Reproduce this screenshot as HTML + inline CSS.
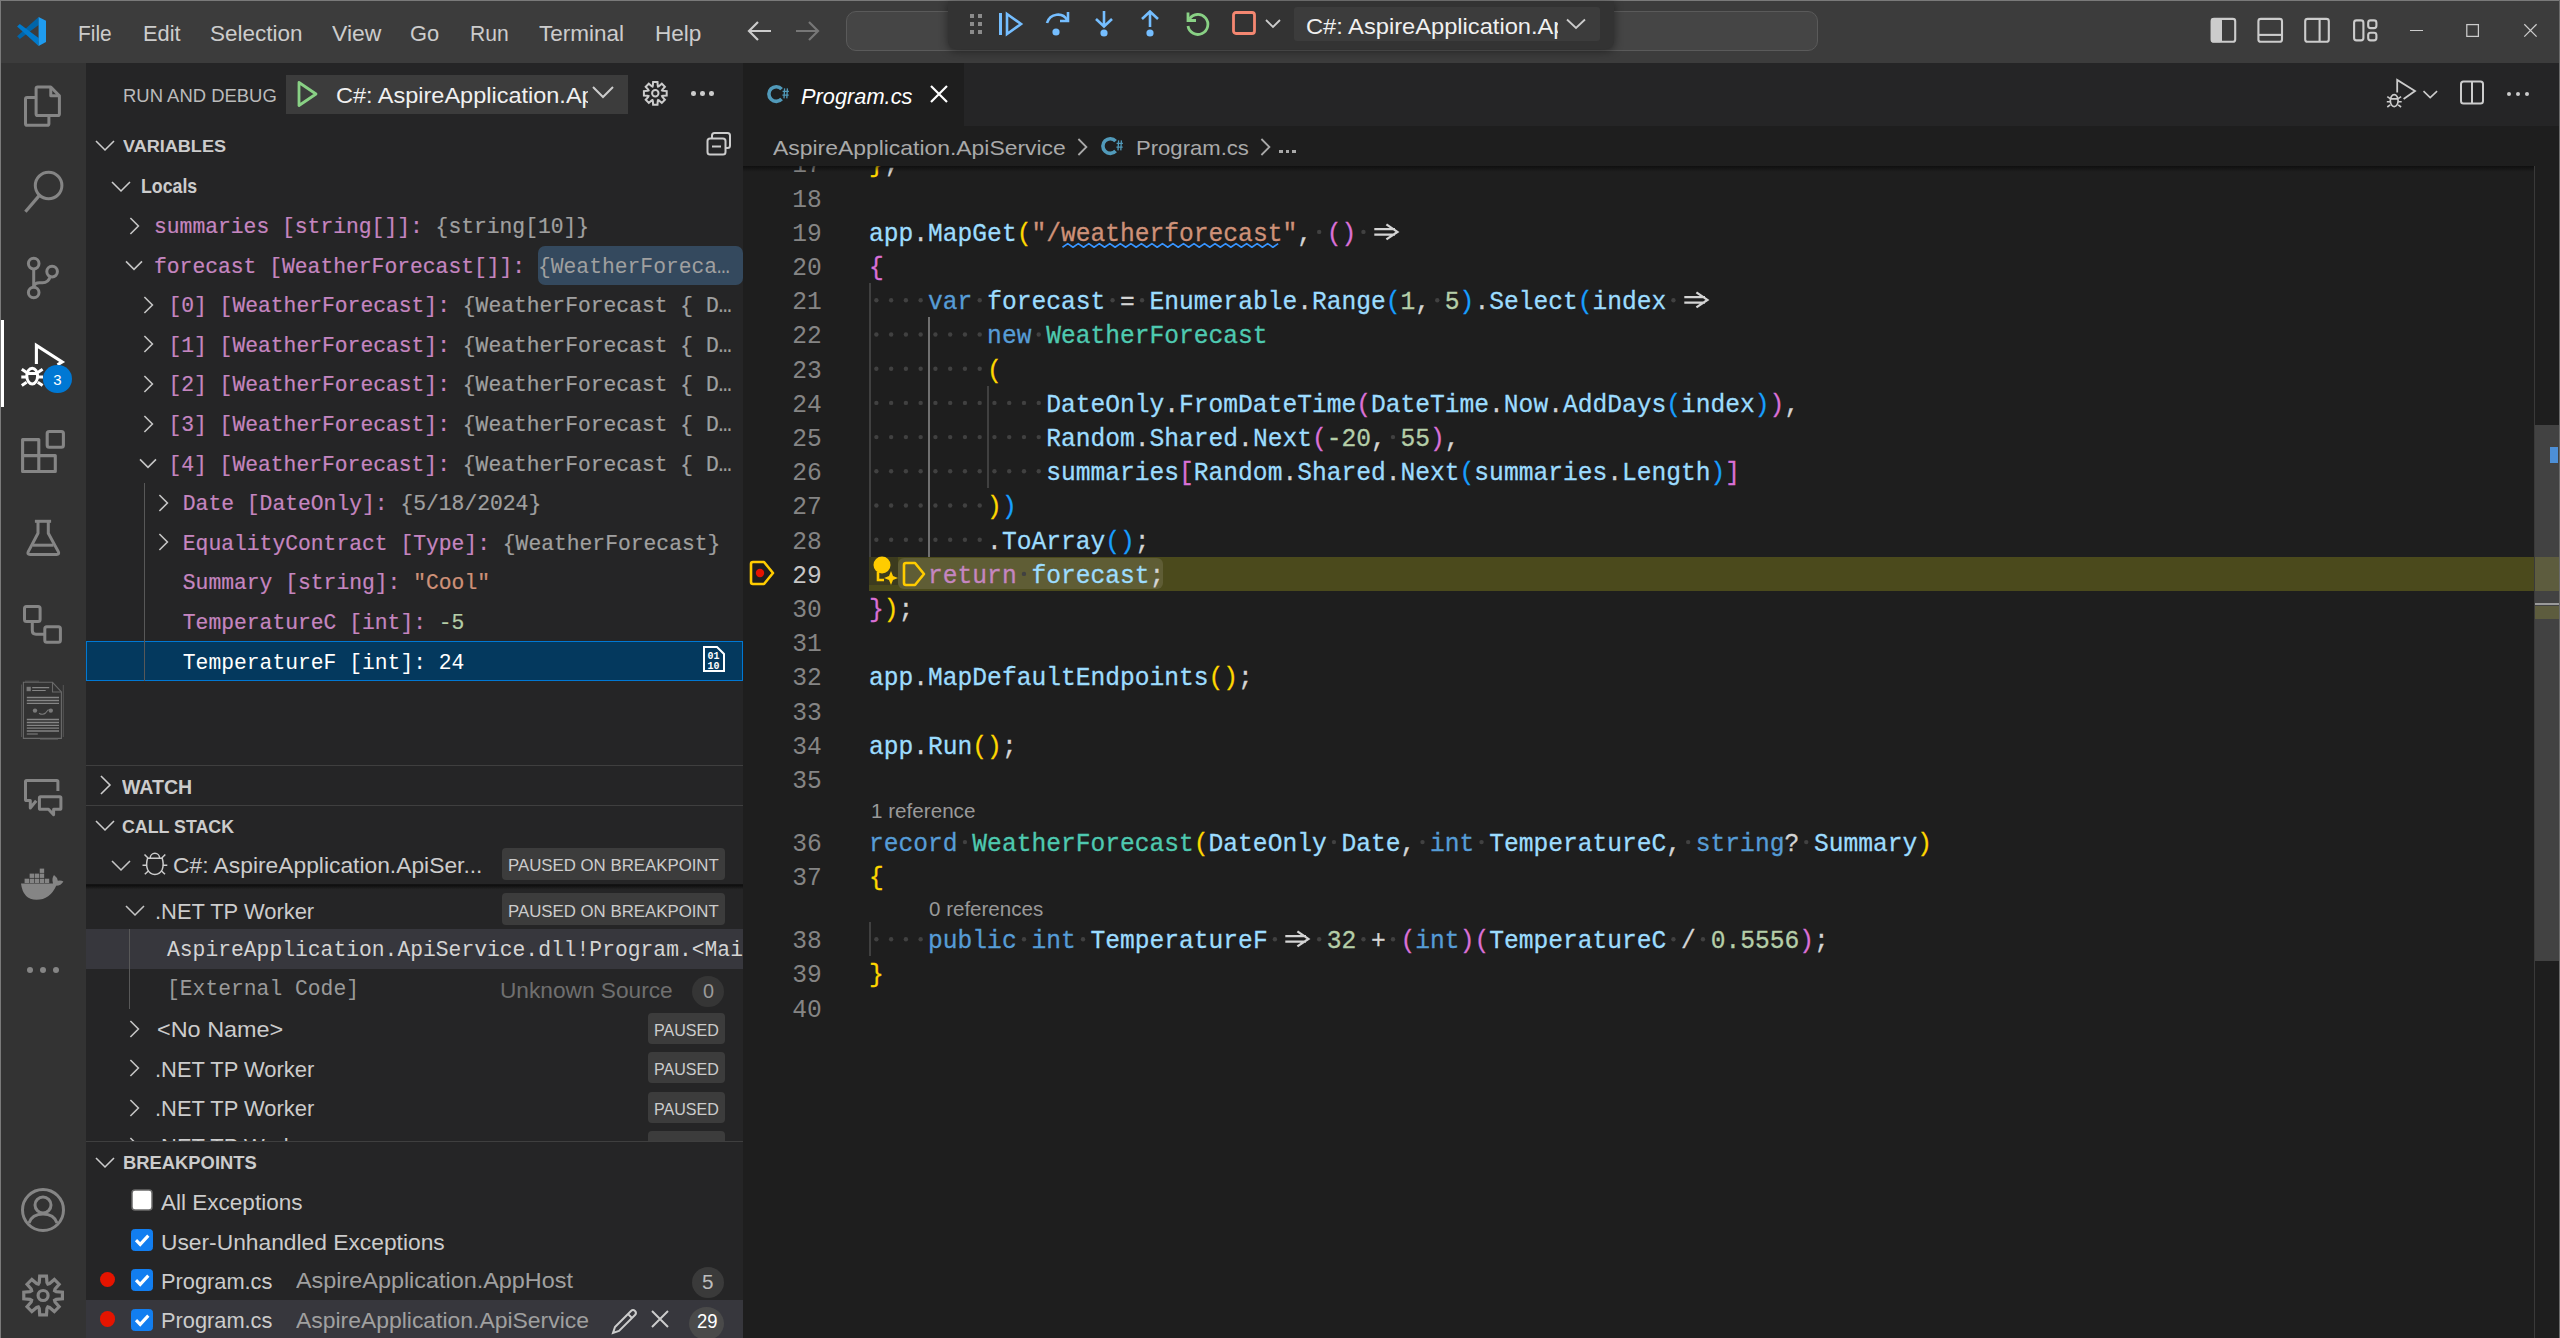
<!DOCTYPE html>
<html><head><meta charset="utf-8"><style>
html,body{margin:0;padding:0;background:#1e1e1e;}
body{width:2560px;height:1338px;position:relative;overflow:hidden;}
</style></head><body>
<div style="position:absolute;left:0px;top:0px;width:2560px;height:1338px;background:#1e1e1e;"></div><div style="position:absolute;left:0px;top:0px;width:2560px;height:63px;background:#3c3c3c;"></div><div style="position:absolute;left:0px;top:0px;width:2560px;height:1px;background:#7a7a7a;"></div><div style="position:absolute;left:0px;top:0px;width:1px;height:1338px;background:#7a7a7a;"></div><div style="position:absolute;left:1px;top:63px;width:85px;height:1275px;background:#333333;"></div><div style="position:absolute;left:86px;top:63px;width:657px;height:1275px;background:#252526;"></div><div style="position:absolute;left:743px;top:63px;width:1817px;height:63px;background:#252526;"></div><div style="position:absolute;left:743px;top:63px;width:221px;height:63px;background:#1e1e1e;"></div><div style="position:absolute;left:743px;top:126px;width:1817px;height:40px;background:#1e1e1e;"></div><svg style="position:absolute;left:10px;top:10px" width="45" height="45" viewBox="10 10 45 45" fill="none"><path d="M38.6 16.9 L38.6 25.1 L19.8 38.9 L17.1 36.2 Z" fill="#0065a9"/><path d="M19.8 24 L38.6 37.9 L38.6 46 L17.1 26.5 Z" fill="#007acc"/><path d="M38.6 16.9 L46 20.8 L46 42 L38.6 46 Z" fill="#1f9cf0"/></svg><div style="position:absolute;left:78.30px;top:22.31px;font-family:'Liberation Sans', sans-serif;font-size:22.31px;line-height:1.117em;color:#cccccc;font-weight:400;white-space:pre;transform:scaleX(0.9381);transform-origin:0 0;">File</div><div style="position:absolute;left:142.60px;top:22.31px;font-family:'Liberation Sans', sans-serif;font-size:22.31px;line-height:1.117em;color:#cccccc;font-weight:400;white-space:pre;transform:scaleX(0.9769);transform-origin:0 0;">Edit</div><div style="position:absolute;left:209.80px;top:22.31px;font-family:'Liberation Sans', sans-serif;font-size:22.31px;line-height:1.117em;color:#cccccc;font-weight:400;white-space:pre;transform:scaleX(1.0085);transform-origin:0 0;">Selection</div><div style="position:absolute;left:331.60px;top:22.31px;font-family:'Liberation Sans', sans-serif;font-size:22.31px;line-height:1.117em;color:#cccccc;font-weight:400;white-space:pre;transform:scaleX(1.0298);transform-origin:0 0;">View</div><div style="position:absolute;left:410.30px;top:22.31px;font-family:'Liberation Sans', sans-serif;font-size:22.31px;line-height:1.117em;color:#cccccc;font-weight:400;white-space:pre;transform:scaleX(0.9803);transform-origin:0 0;">Go</div><div style="position:absolute;left:469.60px;top:22.31px;font-family:'Liberation Sans', sans-serif;font-size:22.31px;line-height:1.117em;color:#cccccc;font-weight:400;white-space:pre;transform:scaleX(0.9452);transform-origin:0 0;">Run</div><div style="position:absolute;left:538.90px;top:22.31px;font-family:'Liberation Sans', sans-serif;font-size:22.31px;line-height:1.117em;color:#cccccc;font-weight:400;white-space:pre;transform:scaleX(1.0090);transform-origin:0 0;">Terminal</div><div style="position:absolute;left:654.70px;top:22.31px;font-family:'Liberation Sans', sans-serif;font-size:22.31px;line-height:1.117em;color:#cccccc;font-weight:400;white-space:pre;transform:scaleX(1.0119);transform-origin:0 0;">Help</div><svg style="position:absolute;left:746px;top:19px;" width="28" height="24" viewBox="0 0 28 24" fill="none"><path d="M3 12 H25 M12 3 L3 12 L12 21" stroke="#cccccc" stroke-width="2.2"/></svg><svg style="position:absolute;left:793px;top:19px;" width="28" height="24" viewBox="0 0 28 24" fill="none"><path d="M25 12 H3 M16 3 L25 12 L16 21" stroke="#777777" stroke-width="2.2"/></svg><div style="position:absolute;left:846px;top:11px;width:972px;height:40px;background:#454545;box-sizing:border-box;border:1px solid #5a5a5a;border-radius:10px;"></div><div style="position:absolute;left:948px;top:1px;width:666px;height:48px;background:#333333;border-radius:0 0 8px 8px;box-shadow:0 2px 10px rgba(0,0,0,0.45);"></div><svg style="position:absolute;left:970px;top:14px;" width="12" height="20" viewBox="0 0 12 20" fill="none"><rect x="0" y="0" width="4" height="4" fill="#8b8b8b"/><rect x="0" y="8" width="4" height="4" fill="#8b8b8b"/><rect x="0" y="16" width="4" height="4" fill="#8b8b8b"/><rect x="8" y="0" width="4" height="4" fill="#8b8b8b"/><rect x="8" y="8" width="4" height="4" fill="#8b8b8b"/><rect x="8" y="16" width="4" height="4" fill="#8b8b8b"/></svg><svg style="position:absolute;left:998px;top:11px;" width="26" height="26" viewBox="0 0 26 26" fill="none"><path d="M2.5 2 V24" stroke="#75beff" stroke-width="3"/><path d="M9 3 L23 13 L9 23 Z" stroke="#75beff" stroke-width="2.6" stroke-linejoin="miter"/></svg><svg style="position:absolute;left:1044px;top:10px;" width="28" height="28" viewBox="0 0 28 28" fill="none"><path d="M3 13 C6 3 19 2 23 10" stroke="#75beff" stroke-width="2.6"/><path d="M24 2 V11 H16" stroke="#75beff" stroke-width="2.6"/><circle cx="12" cy="22" r="3.6" fill="#75beff"/></svg><svg style="position:absolute;left:1091px;top:10px;" width="26" height="28" viewBox="0 0 26 28" fill="none"><path d="M13 1 V15 M5 9 L13 16.5 L21 9" stroke="#75beff" stroke-width="2.6"/><circle cx="13" cy="23" r="3.6" fill="#75beff"/></svg><svg style="position:absolute;left:1137px;top:10px;" width="26" height="28" viewBox="0 0 26 28" fill="none"><path d="M13 17 V2 M5 9 L13 1.5 L21 9" stroke="#75beff" stroke-width="2.6"/><circle cx="13" cy="23" r="3.6" fill="#75beff"/></svg><svg style="position:absolute;left:1184px;top:10px;" width="28" height="28" viewBox="0 0 28 28" fill="none"><path d="M5.5 9 A10 10 0 1 1 4 16" stroke="#89d185" stroke-width="2.8"/><path d="M4 2.5 V10.5 H12" stroke="#89d185" stroke-width="2.8"/></svg><svg style="position:absolute;left:1231px;top:10px;" width="26" height="26" viewBox="0 0 26 26" fill="none"><rect x="2.5" y="2.5" width="21" height="21" rx="2.5" stroke="#f48771" stroke-width="2.8"/></svg><svg style="position:absolute;left:1264px;top:18px;" width="18" height="12" viewBox="0 0 18 12" fill="none"><path d="M2 2 L9 9 L16 2" stroke="#cccccc" stroke-width="1.8"/></svg><div style="position:absolute;left:1294px;top:7px;width:306px;height:34px;background:#3c3c3c;border-radius:3px;"></div><div style="position:absolute;left:1294px;top:7px;width:264px;height:34px;overflow:hidden;"><div style="position:absolute;left:-1294px;top:-7px;width:2560px;height:63px;"><div style="position:absolute;left:1306.00px;top:14.81px;font-family:'Liberation Sans', sans-serif;font-size:22.31px;line-height:1.117em;color:#f0f0f0;font-weight:400;white-space:pre;transform:scaleX(1.0616);transform-origin:0 0;">C#: AspireApplication.Api</div></div></div><svg style="position:absolute;left:1564px;top:16px;" width="24" height="16" viewBox="0 0 24 16" fill="none"><path d="M3 3.5 L12 12 L21 3.5" stroke="#cccccc" stroke-width="1.8"/></svg><svg style="position:absolute;left:2200px;top:10px" width="200" height="45" viewBox="2200 10 200 45" fill="none"><rect x="2211.6" y="18.9" width="23.6" height="22.9" rx="2.4" stroke="#cccccc" stroke-width="2.1"/><rect x="2211" y="18.3" width="11" height="24" rx="2" fill="#cccccc"/><rect x="2258.4" y="18.9" width="23.6" height="22.9" rx="2.4" stroke="#cccccc" stroke-width="2.1"/><path d="M2258.4 34.9 H2282" stroke="#cccccc" stroke-width="2.1"/><rect x="2305.2" y="18.9" width="23.6" height="22.9" rx="2.4" stroke="#cccccc" stroke-width="2.1"/><path d="M2319.6 18.9 V41.8" stroke="#cccccc" stroke-width="2.1"/><rect x="2354.1" y="20.4" width="9.3" height="20" rx="2.4" stroke="#cccccc" stroke-width="2.1"/><rect x="2368.2" y="20.4" width="8.2" height="7.7" rx="2.4" stroke="#cccccc" stroke-width="2.1"/><rect x="2368.2" y="32.7" width="8.2" height="7.7" rx="2.4" stroke="#cccccc" stroke-width="2.1"/></svg><div style="position:absolute;left:2410px;top:29.7px;width:13.1px;height:1.2px;background:#cccccc;"></div><svg style="position:absolute;left:2455px;top:15px" width="35" height="30" viewBox="2455 15 35 30" fill="none"><rect x="2466.8" y="24.6" width="11.6" height="11.8" stroke="#cccccc" stroke-width="1.25"/></svg><svg style="position:absolute;left:2515px;top:15px" width="30" height="30" viewBox="2515 15 30 30" fill="none"><path d="M2524.3 24.3 L2536.6 36.6 M2536.6 24.3 L2524.3 36.6" stroke="#cccccc" stroke-width="1.25"/></svg><svg style="position:absolute;left:15px;top:78px" width="57" height="54" viewBox="15 78 57 54" fill="none"><path d="M36.1 88.6 Q36.1 87 37.7 87 H50.8 L59.4 95.8 V113.9 Q59.4 115.5 57.8 115.5 H37.7 Q36.1 115.5 36.1 113.9 Z" stroke="#858585" stroke-width="3" stroke-linejoin="round"/><path d="M50.8 87 V95.8 H59.4" stroke="#858585" stroke-width="3" stroke-linejoin="round"/><path d="M36.1 97.5 H27.1 Q25.5 97.5 25.5 99.1 V123.7 Q25.5 125.3 27.1 125.3 H47.3 Q48.9 125.3 48.9 123.7 V115.5" stroke="#858585" stroke-width="3" stroke-linejoin="round"/></svg><svg style="position:absolute;left:15px;top:160px" width="57" height="60" viewBox="15 160 57 60" fill="none"><circle cx="48.6" cy="185.5" r="13.3" stroke="#858585" stroke-width="3"/><path d="M39.2 195.6 L25.4 211.8" stroke="#858585" stroke-width="3.2"/></svg><svg style="position:absolute;left:15px;top:248px" width="57" height="57" viewBox="15 248 57 57" fill="none"><circle cx="33.7" cy="263.6" r="5.3" stroke="#858585" stroke-width="3"/><circle cx="33.7" cy="292.5" r="5.3" stroke="#858585" stroke-width="3"/><circle cx="52.1" cy="271.6" r="5.3" stroke="#858585" stroke-width="3"/><path d="M33.7 268.9 V287.2" stroke="#858585" stroke-width="3"/><path d="M50.2 276.6 Q48.5 282.8 42.5 282.8 H39.5 Q34.5 282.8 33.7 287" stroke="#858585" stroke-width="3"/></svg><div style="position:absolute;left:1px;top:320px;width:3px;height:87px;background:#ffffff;"></div><svg style="position:absolute;left:10px;top:330px" width="70" height="70" viewBox="10 330 70 70" fill="none"><path d="M36.4 364 V345.4 L62.2 361.9 L57.5 364.8" stroke="#ffffff" stroke-width="3.1" stroke-linejoin="miter" stroke-miterlimit="10"/><ellipse cx="32.2" cy="376.1" rx="5.4" ry="7.9" stroke="#ffffff" stroke-width="3"/><path d="M26.8 373.4 H37.6 M21.3 377.1 H27 M37.4 377.1 H43 M21.8 369.3 L26.6 372.6 M42.6 369.3 L37.8 372.6 M21.8 385.6 L26.6 382.3 M42.6 385.6 L37.8 382.3" stroke="#ffffff" stroke-width="3"/></svg><div style="position:absolute;left:43.3px;top:364.9px;width:28.6px;height:28.6px;border-radius:50%;background:#0078d4;"></div><div style="position:absolute;left:53.30px;top:372.45px;font-family:'Liberation Sans', sans-serif;font-size:14.97px;line-height:1.117em;color:#ffffff;font-weight:400;white-space:pre;">3</div><svg style="position:absolute;left:10px;top:420px" width="70" height="70" viewBox="10 420 70 70" fill="none"><path d="M22.6 439.6 H38.8 V455.6 H55.3 V471.5 H22.6 Z M22.6 455.6 H38.8 V471.5" stroke="#858585" stroke-width="3.1" stroke-linejoin="round"/><rect x="47.2" y="431.5" width="16.2" height="15.7" rx="2" stroke="#858585" stroke-width="3.1"/></svg><svg style="position:absolute;left:15px;top:510px" width="57" height="55" viewBox="15 510 57 55" fill="none"><path d="M34.9 521.3 H51.1" stroke="#858585" stroke-width="3"/><path d="M38 521.3 V533.2 L28.3 551.6 Q27 554.5 30 554.5 H56.6 Q59.6 554.5 58.3 551.6 L48.3 533.2 V521.3" stroke="#858585" stroke-width="3" stroke-linejoin="round"/><path d="M32.8 545.2 H53.5" stroke="#858585" stroke-width="3"/></svg><svg style="position:absolute;left:15px;top:598px" width="57" height="52" viewBox="15 598 57 52" fill="none"><rect x="24.5" y="606.4" width="15.6" height="15.2" rx="2" stroke="#858585" stroke-width="3"/><rect x="44.8" y="626.7" width="15.6" height="15.6" rx="2" stroke="#858585" stroke-width="3"/><path d="M32.3 621.6 V630.5 Q32.3 634.2 36 634.2 H44.8" stroke="#858585" stroke-width="3"/></svg><svg style="position:absolute;left:15px;top:675px" width="57" height="70" viewBox="15 675 57 70" fill="none"><path d="M23.4 682.3 H52.5 L61.4 692 V738.4 H23.4 Z" stroke="#6a6a6a" stroke-width="1.1"/><path d="M52.5 682.3 V692 H61.4" stroke="#6a6a6a" stroke-width="1.1"/><path d="M21.6 684.5 V737 M63.3 685 V737 M25 681.2 H39 M40 739.3 H58" stroke="#5a5a5a" stroke-width="0.9"/><rect x="26.6" y="686.8" width="4.2" height="4.4" fill="#7a7a7a"/><path d="M32.2 687.7 H49.2 M32.2 690.5 H45.7 M26.8 734 H37.8" stroke="#858585" stroke-width="1.2"/><path d="M26.8 697.5 H59" stroke="#858585" stroke-width="1.3"/><path d="M26.8 700.5 H59" stroke="#858585" stroke-width="1.3"/><path d="M26.8 703.3 H59" stroke="#858585" stroke-width="1.3"/><path d="M26.8 719.5 H59" stroke="#858585" stroke-width="1.3"/><path d="M26.8 722.5 H59" stroke="#858585" stroke-width="1.3"/><path d="M26.8 725.3 H59" stroke="#858585" stroke-width="1.3"/><path d="M26.8 728.1 H59" stroke="#858585" stroke-width="1.3"/><path d="M26.8 731 H59" stroke="#858585" stroke-width="1.3"/><circle cx="35" cy="710.6" r="2.2" fill="#7a7a7a"/><circle cx="50.8" cy="710.6" r="2.2" fill="#7a7a7a"/><path d="M39 713.2 Q43 715.5 45.5 713 L48.5 709.5" stroke="#7a7a7a" stroke-width="1.1"/></svg><svg style="position:absolute;left:15px;top:770px" width="57" height="55" viewBox="15 770 57 55" fill="none"><path d="M57.9 791 V781.5 Q57.9 780.4 56.8 780.4 H26.6 Q25.5 780.4 25.5 781.5 V799.4 Q25.5 800.5 26.6 800.5 H30.3 V808 L36.2 800.7" stroke="#858585" stroke-width="3" stroke-linejoin="round"/><path d="M40.5 796.8 Q39.4 796.8 39.4 797.9 V808.2 Q39.4 809.3 40.5 809.3 H48.5 L53.6 814.7 V809.3 H59.8 Q60.9 809.3 60.9 808.2 V797.9 Q60.9 796.8 59.8 796.8 Z" stroke="#858585" stroke-width="3" stroke-linejoin="round"/></svg><svg style="position:absolute;left:15px;top:860px" width="57" height="45" viewBox="15 860 57 45" fill="none"><g fill="#858585"><rect x="24.60" y="878.7" width="4.4" height="4.3"/><rect x="29.65" y="878.7" width="4.4" height="4.3"/><rect x="34.70" y="878.7" width="4.4" height="4.3"/><rect x="39.75" y="878.7" width="4.4" height="4.3"/><rect x="44.80" y="878.7" width="4.4" height="4.3"/><rect x="29.65" y="873.6" width="4.4" height="4.3"/><rect x="34.70" y="873.6" width="4.4" height="4.3"/><rect x="39.75" y="873.6" width="4.4" height="4.3"/><rect x="39.75" y="868.6" width="4.4" height="4.3"/><path d="M21 883.6 H53 Q51.5 878 54 875 Q57.5 877.5 57.8 880.8 Q61 880.2 63.4 881.4 Q61 885.5 56.2 885.8 Q50 899.8 36.5 899.8 Q23 899.8 21 883.6 Z"/></g></svg><div style="position:absolute;left:27px;top:967px;width:6px;height:6px;border-radius:50%;background:#858585;"></div><div style="position:absolute;left:40px;top:967px;width:6px;height:6px;border-radius:50%;background:#858585;"></div><div style="position:absolute;left:53px;top:967px;width:6px;height:6px;border-radius:50%;background:#858585;"></div><svg style="position:absolute;left:19px;top:1186px;" width="48" height="48" viewBox="0 0 48 48" fill="none"><circle cx="24" cy="24" r="20.5" stroke="#858585" stroke-width="3"/><circle cx="24" cy="19" r="8" stroke="#858585" stroke-width="3"/><path d="M10 37 Q13 28 24 28 Q35 28 38 37" stroke="#858585" stroke-width="3"/></svg><svg style="position:absolute;left:15px;top:1265px" width="57" height="60" viewBox="15 1265 57 60" fill="none"><path d="M39.25 1282.46 L39.72 1276.19 L46.48 1276.19 L46.95 1282.46 L47.85 1284.04 L49.60 1283.56 L54.36 1279.46 L59.14 1284.24 L55.04 1289.00 L54.56 1290.75 L56.14 1291.65 L62.41 1292.12 L62.41 1298.88 L56.14 1299.35 L54.56 1300.25 L55.04 1302.00 L59.14 1306.76 L54.36 1311.54 L49.60 1307.44 L47.85 1306.96 L46.95 1308.54 L46.48 1314.81 L39.72 1314.81 L39.25 1308.54 L38.35 1306.96 L36.60 1307.44 L31.84 1311.54 L27.06 1306.76 L31.16 1302.00 L31.64 1300.25 L30.06 1299.35 L23.79 1298.88 L23.79 1292.12 L30.06 1291.65 L31.64 1290.75 L31.16 1289.00 L27.06 1284.24 L31.84 1279.46 L36.60 1283.56 L38.35 1284.04 Z" stroke="#858585" stroke-width="3.2" stroke-linejoin="miter"/><circle cx="43.1" cy="1295.5" r="5" stroke="#858585" stroke-width="3.2"/></svg><div style="position:absolute;left:122.90px;top:85.83px;font-family:'Liberation Sans', sans-serif;font-size:18.64px;line-height:1.117em;color:#bbbbbb;font-weight:400;white-space:pre;transform:scaleX(0.9906);transform-origin:0 0;">RUN AND DEBUG</div><div style="position:absolute;left:286px;top:75px;width:342px;height:39px;background:#3c3c3c;"></div><svg style="position:absolute;left:294px;top:79px;" width="28" height="30" viewBox="0 0 28 30" fill="none"><path d="M5 3.5 L22 15 L5 26.5 Z" stroke="#89d185" stroke-width="2.8" stroke-linejoin="round"/></svg><div style="position:absolute;left:330px;top:75px;width:258px;height:39px;overflow:hidden;"><div style="position:absolute;left:6.00px;top:9.05px;font-family:'Liberation Sans', sans-serif;font-size:22.04px;line-height:1.117em;color:#f0f0f0;font-weight:400;white-space:pre;transform:scaleX(1.0666);transform-origin:0 0;">C#: AspireApplication.Api</div></div><svg style="position:absolute;left:590px;top:84px;" width="26" height="18" viewBox="0 0 26 18" fill="none"><path d="M3 3 L13 13 L23 3" stroke="#cccccc" stroke-width="2"/></svg><svg style="position:absolute;left:638px;top:76px" width="35" height="35" viewBox="638 76 35 35" fill="none"><path d="M652.84 85.69 L653.11 81.91 L657.49 81.91 L657.76 85.69 L658.09 86.56 L658.94 86.18 L661.81 83.70 L664.90 86.79 L662.42 89.66 L662.04 90.51 L662.91 90.84 L666.69 91.11 L666.69 95.49 L662.91 95.76 L662.04 96.09 L662.42 96.94 L664.90 99.81 L661.81 102.90 L658.94 100.42 L658.09 100.04 L657.76 100.91 L657.49 104.69 L653.11 104.69 L652.84 100.91 L652.51 100.04 L651.66 100.42 L648.79 102.90 L645.70 99.81 L648.18 96.94 L648.56 96.09 L647.69 95.76 L643.91 95.49 L643.91 91.11 L647.69 90.84 L648.56 90.51 L648.18 89.66 L645.70 86.79 L648.79 83.70 L651.66 86.18 L652.51 86.56 Z" stroke="#cccccc" stroke-width="2" stroke-linejoin="miter"/><circle cx="655.3" cy="93.3" r="3.2" stroke="#cccccc" stroke-width="2"/></svg><div style="position:absolute;left:691.1px;top:91.1px;width:4.6px;height:4.6px;border-radius:50%;background:#cccccc;"></div><div style="position:absolute;left:700.1px;top:91.1px;width:4.6px;height:4.6px;border-radius:50%;background:#cccccc;"></div><div style="position:absolute;left:709.1px;top:91.1px;width:4.6px;height:4.6px;border-radius:50%;background:#cccccc;"></div><svg style="position:absolute;left:93.5px;top:136px;" width="22" height="18" viewBox="0 0 22 18" fill="none"><path d="M2 4.95 L11 13.95 L20 4.95" stroke="#cccccc" stroke-width="1.6"/></svg><div style="position:absolute;left:122.90px;top:137.49px;font-family:'Liberation Sans', sans-serif;font-size:17.14px;line-height:1.117em;color:#cccccc;font-weight:700;white-space:pre;transform:scaleX(1.0542);transform-origin:0 0;">VARIABLES</div><svg style="position:absolute;left:704px;top:130px;" width="30" height="28" viewBox="0 0 30 28" fill="none"><rect x="8" y="3" width="18" height="15" rx="2.5" stroke="#cccccc" stroke-width="2"/><rect x="3.5" y="8.5" width="18" height="16" rx="2.5" fill="#252526" stroke="#cccccc" stroke-width="2"/><path d="M8 16.5 H17" stroke="#cccccc" stroke-width="2"/></svg><svg style="position:absolute;left:109.5px;top:176.5px;" width="22" height="18" viewBox="0 0 22 18" fill="none"><path d="M2 4.95 L11 13.95 L20 4.95" stroke="#cccccc" stroke-width="1.6"/></svg><div style="position:absolute;left:140.60px;top:176.22px;font-family:'Liberation Sans', sans-serif;font-size:19.32px;line-height:1.117em;color:#cccccc;font-weight:700;white-space:pre;transform:scaleX(0.9193);transform-origin:0 0;">Locals</div><svg style="position:absolute;left:126.0px;top:215.60000000000002px;" width="16" height="20" viewBox="0 0 16 20" fill="none"><path d="M4.4 2 L12.4 10 L4.4 18" stroke="#c5c5c5" stroke-width="1.6"/></svg><div style="position:absolute;left:154.00px;top:215.04px;font-family:'Liberation Mono', monospace;font-size:21.33px;line-height:1.1328em;color:#ccc;font-weight:400;white-space:pre;-webkit-text-stroke:0.2px currentColor;"><span style="color:#c586c0">summaries [string[]]: </span><span style="color:#a0a0a0">{string[10]}</span></div><svg style="position:absolute;left:123.5px;top:257.2px;" width="20" height="16" viewBox="0 0 20 16" fill="none"><path d="M2 4.4 L10 12.4 L18 4.4" stroke="#c5c5c5" stroke-width="1.6"/></svg><div style="position:absolute;left:154.00px;top:254.64px;font-family:'Liberation Mono', monospace;font-size:21.33px;line-height:1.1328em;color:#ccc;font-weight:400;white-space:pre;-webkit-text-stroke:0.2px currentColor;"><span style="color:#c586c0">forecast [WeatherForecast[]]: </span></div><svg style="position:absolute;left:140.4px;top:294.8px;" width="16" height="20" viewBox="0 0 16 20" fill="none"><path d="M4.4 2 L12.4 10 L4.4 18" stroke="#c5c5c5" stroke-width="1.6"/></svg><div style="position:absolute;left:168.40px;top:294.24px;font-family:'Liberation Mono', monospace;font-size:21.33px;line-height:1.1328em;color:#ccc;font-weight:400;white-space:pre;-webkit-text-stroke:0.2px currentColor;"><span style="color:#c586c0">[0] [WeatherForecast]: </span><span style="color:#a0a0a0">{WeatherForecast { D…</span></div><svg style="position:absolute;left:140.4px;top:334.40000000000003px;" width="16" height="20" viewBox="0 0 16 20" fill="none"><path d="M4.4 2 L12.4 10 L4.4 18" stroke="#c5c5c5" stroke-width="1.6"/></svg><div style="position:absolute;left:168.40px;top:333.84px;font-family:'Liberation Mono', monospace;font-size:21.33px;line-height:1.1328em;color:#ccc;font-weight:400;white-space:pre;-webkit-text-stroke:0.2px currentColor;"><span style="color:#c586c0">[1] [WeatherForecast]: </span><span style="color:#a0a0a0">{WeatherForecast { D…</span></div><svg style="position:absolute;left:140.4px;top:374.00000000000006px;" width="16" height="20" viewBox="0 0 16 20" fill="none"><path d="M4.4 2 L12.4 10 L4.4 18" stroke="#c5c5c5" stroke-width="1.6"/></svg><div style="position:absolute;left:168.40px;top:373.44px;font-family:'Liberation Mono', monospace;font-size:21.33px;line-height:1.1328em;color:#ccc;font-weight:400;white-space:pre;-webkit-text-stroke:0.2px currentColor;"><span style="color:#c586c0">[2] [WeatherForecast]: </span><span style="color:#a0a0a0">{WeatherForecast { D…</span></div><svg style="position:absolute;left:140.4px;top:413.6px;" width="16" height="20" viewBox="0 0 16 20" fill="none"><path d="M4.4 2 L12.4 10 L4.4 18" stroke="#c5c5c5" stroke-width="1.6"/></svg><div style="position:absolute;left:168.40px;top:413.04px;font-family:'Liberation Mono', monospace;font-size:21.33px;line-height:1.1328em;color:#ccc;font-weight:400;white-space:pre;-webkit-text-stroke:0.2px currentColor;"><span style="color:#c586c0">[3] [WeatherForecast]: </span><span style="color:#a0a0a0">{WeatherForecast { D…</span></div><svg style="position:absolute;left:137.9px;top:455.20000000000005px;" width="20" height="16" viewBox="0 0 20 16" fill="none"><path d="M2 4.4 L10 12.4 L18 4.4" stroke="#c5c5c5" stroke-width="1.6"/></svg><div style="position:absolute;left:168.40px;top:452.64px;font-family:'Liberation Mono', monospace;font-size:21.33px;line-height:1.1328em;color:#ccc;font-weight:400;white-space:pre;-webkit-text-stroke:0.2px currentColor;"><span style="color:#c586c0">[4] [WeatherForecast]: </span><span style="color:#a0a0a0">{WeatherForecast { D…</span></div><svg style="position:absolute;left:154.8px;top:492.8px;" width="16" height="20" viewBox="0 0 16 20" fill="none"><path d="M4.4 2 L12.4 10 L4.4 18" stroke="#c5c5c5" stroke-width="1.6"/></svg><div style="position:absolute;left:182.80px;top:492.24px;font-family:'Liberation Mono', monospace;font-size:21.33px;line-height:1.1328em;color:#ccc;font-weight:400;white-space:pre;-webkit-text-stroke:0.2px currentColor;"><span style="color:#c586c0">Date [DateOnly]: </span><span style="color:#a0a0a0">{5/18/2024}</span></div><svg style="position:absolute;left:154.8px;top:532.4px;" width="16" height="20" viewBox="0 0 16 20" fill="none"><path d="M4.4 2 L12.4 10 L4.4 18" stroke="#c5c5c5" stroke-width="1.6"/></svg><div style="position:absolute;left:182.80px;top:531.84px;font-family:'Liberation Mono', monospace;font-size:21.33px;line-height:1.1328em;color:#ccc;font-weight:400;white-space:pre;-webkit-text-stroke:0.2px currentColor;"><span style="color:#c586c0">EqualityContract [Type]: </span><span style="color:#a0a0a0">{WeatherForecast}</span></div><div style="position:absolute;left:182.80px;top:571.44px;font-family:'Liberation Mono', monospace;font-size:21.33px;line-height:1.1328em;color:#ccc;font-weight:400;white-space:pre;-webkit-text-stroke:0.2px currentColor;"><span style="color:#c586c0">Summary [string]: </span><span style="color:#ce9178">&quot;Cool&quot;</span></div><div style="position:absolute;left:182.80px;top:611.04px;font-family:'Liberation Mono', monospace;font-size:21.33px;line-height:1.1328em;color:#ccc;font-weight:400;white-space:pre;-webkit-text-stroke:0.2px currentColor;"><span style="color:#c586c0">TemperatureC [int]: </span><span style="color:#b5cea8">-5</span></div><div style="position:absolute;left:538px;top:246px;width:205px;height:39px;background:#34495e;border-radius:7px;"></div><div style="position:absolute;left:537.94px;top:254.64px;font-family:'Liberation Mono', monospace;font-size:21.33px;line-height:1.1328em;color:#a0a0a0;font-weight:400;white-space:pre;">{WeatherForeca…</div><div style="position:absolute;left:86px;top:641px;width:657px;height:40px;background:#04395e;box-sizing:border-box;border:1.5px solid #0078d4;"></div><div style="position:absolute;left:182.80px;top:650.64px;font-family:'Liberation Mono', monospace;font-size:21.33px;line-height:1.1328em;color:#ffffff;font-weight:400;white-space:pre;">TemperatureF [int]: 24</div><svg style="position:absolute;left:700px;top:643.5px;" width="28" height="30" viewBox="0 0 28 30" fill="none"><path d="M4 3 H17 L24 10 V27 H4 Z" stroke="#ffffff" stroke-width="2"/><text x="13.5" y="15" font-family="Liberation Mono" font-size="10" font-weight="700" fill="#ffffff" text-anchor="middle">01</text><text x="13.5" y="25" font-family="Liberation Mono" font-size="10" font-weight="700" fill="#ffffff" text-anchor="middle">10</text></svg><div style="position:absolute;left:144px;top:483px;width:1.2px;height:198px;background:#585858;"></div><div style="position:absolute;left:86px;top:765px;width:657px;height:1.2px;background:#3f3f3f;"></div><svg style="position:absolute;left:96px;top:774px;" width="18" height="22" viewBox="0 0 18 22" fill="none"><path d="M4.95 2 L13.95 11 L4.95 20" stroke="#cccccc" stroke-width="1.6"/></svg><div style="position:absolute;left:122.40px;top:776.33px;font-family:'Liberation Sans', sans-serif;font-size:19.86px;line-height:1.117em;color:#cccccc;font-weight:700;white-space:pre;transform:scaleX(0.9830);transform-origin:0 0;">WATCH</div><div style="position:absolute;left:86px;top:805px;width:657px;height:1.2px;background:#3f3f3f;"></div><svg style="position:absolute;left:93.5px;top:815.5px;" width="22" height="18" viewBox="0 0 22 18" fill="none"><path d="M2 4.95 L11 13.95 L20 4.95" stroke="#cccccc" stroke-width="1.6"/></svg><div style="position:absolute;left:122.40px;top:815.66px;font-family:'Liberation Sans', sans-serif;font-size:19.05px;line-height:1.117em;color:#cccccc;font-weight:700;white-space:pre;transform:scaleX(0.9349);transform-origin:0 0;">CALL STACK</div><div style="position:absolute;left:86px;top:884px;width:657px;height:6px;background:linear-gradient(#161616, rgba(37,37,38,0));"></div><svg style="position:absolute;left:124px;top:901px;" width="22" height="18" viewBox="0 0 22 18" fill="none"><path d="M2 4.95 L11 13.95 L20 4.95" stroke="#c5c5c5" stroke-width="1.6"/></svg><div style="position:absolute;left:154.80px;top:899.85px;font-family:'Liberation Sans', sans-serif;font-size:22.04px;line-height:1.117em;color:#cccccc;font-weight:400;white-space:pre;transform:scaleX(0.9949);transform-origin:0 0;">.NET TP Worker</div><div style="position:absolute;left:502px;top:893.3px;width:223px;height:31.300000000000068px;background:#3c3c3c;border-radius:4px;"></div><div style="position:absolute;left:508.30px;top:901.74px;font-family:'Liberation Sans', sans-serif;font-size:17.41px;line-height:1.117em;color:#cccccc;font-weight:400;white-space:pre;transform:scaleX(0.9657);transform-origin:0 0;">PAUSED ON BREAKPOINT</div><div style="position:absolute;left:86px;top:929.2px;width:657px;height:39.6px;background:#37373d;"></div><div style="position:absolute;left:129px;top:929px;width:1.2px;height:80px;background:#585858;"></div><div style="position:absolute;left:86px;top:929px;width:657px;height:40px;overflow:hidden;"><div style="position:absolute;left:81.00px;top:8.54px;font-family:'Liberation Mono', monospace;font-size:21.33px;line-height:1.1328em;color:#d4d4d4;font-weight:400;white-space:pre;">AspireApplication.ApiService.dll!Program.&lt;Main&gt;$b__0_1()</div></div><div style="position:absolute;left:167.00px;top:976.74px;font-family:'Liberation Mono', monospace;font-size:21.33px;line-height:1.1328em;color:#9a9a9a;font-weight:400;white-space:pre;">[External Code]</div><div style="position:absolute;left:499.70px;top:978.65px;font-family:'Liberation Sans', sans-serif;font-size:22.04px;line-height:1.117em;color:#6f6f6f;font-weight:400;white-space:pre;transform:scaleX(1.0290);transform-origin:0 0;">Unknown Source</div><div style="position:absolute;left:692px;top:975.6px;width:32px;height:31.7px;border-radius:50%;background:#353535;"></div><div style="position:absolute;left:702.50px;top:979.73px;font-family:'Liberation Sans', sans-serif;font-size:20.41px;line-height:1.117em;color:#9a9a9a;font-weight:400;white-space:pre;transform:scaleX(0.9712);transform-origin:0 0;">0</div><svg style="position:absolute;left:126px;top:1018.5999999999999px;" width="16" height="20" viewBox="0 0 16 20" fill="none"><path d="M4.4 2 L12.4 10 L4.4 18" stroke="#c5c5c5" stroke-width="1.6"/></svg><div style="position:absolute;left:156.70px;top:1018.15px;font-family:'Liberation Sans', sans-serif;font-size:22.04px;line-height:1.117em;color:#cccccc;font-weight:400;white-space:pre;transform:scaleX(1.0631);transform-origin:0 0;">&lt;No Name&gt;</div><div style="position:absolute;left:648px;top:1012.8px;width:77px;height:31.200000000000045px;background:#3c3c3c;border-radius:4px;"></div><div style="position:absolute;left:654.30px;top:1020.64px;font-family:'Liberation Sans', sans-serif;font-size:17.41px;line-height:1.117em;color:#cccccc;font-weight:400;white-space:pre;transform:scaleX(0.9224);transform-origin:0 0;">PAUSED</div><svg style="position:absolute;left:126px;top:1058.1px;" width="16" height="20" viewBox="0 0 16 20" fill="none"><path d="M4.4 2 L12.4 10 L4.4 18" stroke="#c5c5c5" stroke-width="1.6"/></svg><div style="position:absolute;left:154.70px;top:1057.65px;font-family:'Liberation Sans', sans-serif;font-size:22.04px;line-height:1.117em;color:#cccccc;font-weight:400;white-space:pre;transform:scaleX(0.9955);transform-origin:0 0;">.NET TP Worker</div><div style="position:absolute;left:648px;top:1052.3px;width:77px;height:31.200000000000045px;background:#3c3c3c;border-radius:4px;"></div><div style="position:absolute;left:654.30px;top:1060.14px;font-family:'Liberation Sans', sans-serif;font-size:17.41px;line-height:1.117em;color:#cccccc;font-weight:400;white-space:pre;transform:scaleX(0.9224);transform-origin:0 0;">PAUSED</div><svg style="position:absolute;left:126px;top:1097.6px;" width="16" height="20" viewBox="0 0 16 20" fill="none"><path d="M4.4 2 L12.4 10 L4.4 18" stroke="#c5c5c5" stroke-width="1.6"/></svg><div style="position:absolute;left:154.70px;top:1097.15px;font-family:'Liberation Sans', sans-serif;font-size:22.04px;line-height:1.117em;color:#cccccc;font-weight:400;white-space:pre;transform:scaleX(0.9955);transform-origin:0 0;">.NET TP Worker</div><div style="position:absolute;left:648px;top:1091.8px;width:77px;height:31.200000000000045px;background:#3c3c3c;border-radius:4px;"></div><div style="position:absolute;left:654.30px;top:1099.64px;font-family:'Liberation Sans', sans-serif;font-size:17.41px;line-height:1.117em;color:#cccccc;font-weight:400;white-space:pre;transform:scaleX(0.9224);transform-origin:0 0;">PAUSED</div><div style="position:absolute;left:86px;top:1128px;width:657px;height:13px;overflow:hidden;"><svg style="position:absolute;left:40px;top:7.5px;" width="16" height="20" viewBox="0 0 16 20" fill="none"><path d="M4.4 2 L12.4 10 L4.4 18" stroke="#c5c5c5" stroke-width="1.6"/></svg></div><div style="position:absolute;left:86px;top:1128px;width:657px;height:13px;overflow:hidden;"><div style="position:absolute;left:68.70px;top:7.35px;font-family:'Liberation Sans', sans-serif;font-size:22.04px;line-height:1.117em;color:#cccccc;font-weight:400;white-space:pre;transform:scaleX(0.9955);transform-origin:0 0;">.NET TP Worker</div><div style="position:absolute;left:562px;top:3.2px;width:77px;height:20px;background:#3c3c3c;border-radius:4px;"></div></div><div style="position:absolute;left:86px;top:845px;width:657px;height:39.6px;background:#252526;"></div><svg style="position:absolute;left:110px;top:855.5px;" width="22" height="18" viewBox="0 0 22 18" fill="none"><path d="M2 4.95 L11 13.95 L20 4.95" stroke="#c5c5c5" stroke-width="1.6"/></svg><svg style="position:absolute;left:138px;top:846px" width="34" height="34" viewBox="138 846 34 34" fill="none"><path d="M150.2 858 A4.7 4.7 0 0 1 159.6 858" stroke="#cccccc" stroke-width="1.5"/><path d="M147.6 858.2 H162.2 C163.4 862 163.6 866 162.2 869.5 C160.8 872.6 158.2 874.4 154.9 874.4 C151.6 874.4 149 872.6 147.6 869.5 C146.2 866 146.4 862 147.6 858.2 Z" stroke="#cccccc" stroke-width="1.5"/><path d="M142.5 865.3 H147 M162.8 865.3 H167.3 M144.5 854.5 L148 858 M165.3 854.5 L161.8 858 M144.8 874.3 L148.3 871 M165 874.3 L161.5 871" stroke="#cccccc" stroke-width="1.5"/></svg><div style="position:absolute;left:173.40px;top:853.75px;font-family:'Liberation Sans', sans-serif;font-size:22.04px;line-height:1.117em;color:#cccccc;font-weight:400;white-space:pre;transform:scaleX(1.0355);transform-origin:0 0;">C#: AspireApplication.ApiSer...</div><div style="position:absolute;left:502px;top:848.1px;width:223px;height:31.799999999999955px;background:#3c3c3c;border-radius:4px;"></div><div style="position:absolute;left:508.30px;top:856.04px;font-family:'Liberation Sans', sans-serif;font-size:17.41px;line-height:1.117em;color:#cccccc;font-weight:400;white-space:pre;transform:scaleX(0.9657);transform-origin:0 0;">PAUSED ON BREAKPOINT</div><div style="position:absolute;left:86px;top:884px;width:657px;height:5px;background:linear-gradient(rgba(0,0,0,0.55), rgba(0,0,0,0));"></div><div style="position:absolute;left:86px;top:1141px;width:657px;height:1.2px;background:#3f3f3f;"></div><svg style="position:absolute;left:93.5px;top:1152.5px;" width="22" height="18" viewBox="0 0 22 18" fill="none"><path d="M2 4.95 L11 13.95 L20 4.95" stroke="#cccccc" stroke-width="1.6"/></svg><div style="position:absolute;left:123.40px;top:1152.00px;font-family:'Liberation Sans', sans-serif;font-size:18.78px;line-height:1.117em;color:#cccccc;font-weight:700;white-space:pre;transform:scaleX(0.9796);transform-origin:0 0;">BREAKPOINTS</div><div style="position:absolute;left:86px;top:1300px;width:657px;height:38px;background:#37373d;"></div><svg style="position:absolute;left:131px;top:1189px;" width="22" height="22" viewBox="0 0 22 22" fill="none"><rect x="1" y="1" width="20" height="20" rx="3" fill="#ffffff" stroke="#6b6b6b" stroke-width="1.5"/></svg><div style="position:absolute;left:160.50px;top:1190.65px;font-family:'Liberation Sans', sans-serif;font-size:22.04px;line-height:1.117em;color:#cccccc;font-weight:400;white-space:pre;transform:scaleX(1.0223);transform-origin:0 0;">All Exceptions</div><svg style="position:absolute;left:131px;top:1228.6px;" width="22" height="22" viewBox="0 0 22 22" fill="none"><rect x="0.5" y="0.5" width="21" height="21" rx="3" fill="#127ef0" stroke="#127ef0"/><path d="M5 11.2 L9.2 15.4 L17.3 6.6" stroke="#ffffff" stroke-width="3.1"/></svg><div style="position:absolute;left:160.50px;top:1230.65px;font-family:'Liberation Sans', sans-serif;font-size:22.04px;line-height:1.117em;color:#cccccc;font-weight:400;white-space:pre;transform:scaleX(1.0342);transform-origin:0 0;">User-Unhandled Exceptions</div><div style="position:absolute;left:99.9px;top:1271.5px;width:15.5px;height:15.5px;border-radius:50%;background:#e51400;"></div><svg style="position:absolute;left:131px;top:1269.0px;" width="22" height="22" viewBox="0 0 22 22" fill="none"><rect x="0.5" y="0.5" width="21" height="21" rx="3" fill="#127ef0" stroke="#127ef0"/><path d="M5 11.2 L9.2 15.4 L17.3 6.6" stroke="#ffffff" stroke-width="3.1"/></svg><div style="position:absolute;left:160.50px;top:1269.55px;font-family:'Liberation Sans', sans-serif;font-size:22.04px;line-height:1.117em;color:#cccccc;font-weight:400;white-space:pre;transform:scaleX(0.9890);transform-origin:0 0;">Program.cs</div><div style="position:absolute;left:296.20px;top:1269.25px;font-family:'Liberation Sans', sans-serif;font-size:22.04px;line-height:1.117em;color:#a0a0a0;font-weight:400;white-space:pre;transform:scaleX(1.0615);transform-origin:0 0;">AspireApplication.AppHost</div><div style="position:absolute;left:691.8px;top:1267.2px;width:32.2px;height:31.2px;border-radius:50%;background:#3a3a3a;"></div><div style="position:absolute;left:702.00px;top:1270.83px;font-family:'Liberation Sans', sans-serif;font-size:20.41px;line-height:1.117em;color:#bdbdbd;font-weight:400;white-space:pre;transform:scaleX(1.0153);transform-origin:0 0;">5</div><div style="position:absolute;left:99.9px;top:1311.0px;width:15.5px;height:15.5px;border-radius:50%;background:#e51400;"></div><svg style="position:absolute;left:131px;top:1308.5px;" width="22" height="22" viewBox="0 0 22 22" fill="none"><rect x="0.5" y="0.5" width="21" height="21" rx="3" fill="#127ef0" stroke="#127ef0"/><path d="M5 11.2 L9.2 15.4 L17.3 6.6" stroke="#ffffff" stroke-width="3.1"/></svg><div style="position:absolute;left:160.50px;top:1309.05px;font-family:'Liberation Sans', sans-serif;font-size:22.04px;line-height:1.117em;color:#cccccc;font-weight:400;white-space:pre;transform:scaleX(0.9890);transform-origin:0 0;">Program.cs</div><div style="position:absolute;left:296.20px;top:1308.75px;font-family:'Liberation Sans', sans-serif;font-size:22.04px;line-height:1.117em;color:#a0a0a0;font-weight:400;white-space:pre;transform:scaleX(1.0401);transform-origin:0 0;">AspireApplication.ApiService</div><div style="position:absolute;left:689px;top:1306.7px;width:35px;height:33px;border-radius:50%;background:#4a4a4a;"></div><div style="position:absolute;left:696.50px;top:1310.33px;font-family:'Liberation Sans', sans-serif;font-size:20.41px;line-height:1.117em;color:#ffffff;font-weight:400;white-space:pre;transform:scaleX(0.9050);transform-origin:0 0;">29</div><svg style="position:absolute;left:609px;top:1303px;" width="32" height="32" viewBox="0 0 32 32" fill="none"><path d="M6 24 L22 8 Q24 6 26 8 Q28 10 26 12 L10 28 L4 30 Z M19 11 L23 15" stroke="#cccccc" stroke-width="2"/></svg><svg style="position:absolute;left:648px;top:1307px;" width="24" height="24" viewBox="0 0 24 24" fill="none"><path d="M4 4 L20 20 M20 4 L4 20" stroke="#cccccc" stroke-width="2"/></svg><svg style="position:absolute;left:766px;top:82.2px" width="27" height="25.0" viewBox="766 82.2 27 25.0" fill="none"><path d="M781.62 89.37 A7.3 7.3 0 1 0 781.62 99.13" stroke="#519aba" stroke-width="3.6"/><path d="M784.60 88.60 L784.00 98.60 M787.40 88.60 L786.80 98.60 M782.60 91.60 H788.90 M782.40 95.30 H788.70" stroke="#519aba" stroke-width="1.3"/></svg><div style="position:absolute;left:801.40px;top:84.71px;font-family:'Liberation Sans', sans-serif;font-size:22.31px;line-height:1.117em;color:#ffffff;font-weight:400;font-style:italic;white-space:pre;transform:scaleX(0.9778);transform-origin:0 0;">Program.cs</div><svg style="position:absolute;left:928px;top:83px;" width="22" height="22" viewBox="0 0 22 22" fill="none"><path d="M3 3 L19 19 M19 3 L3 19" stroke="#ffffff" stroke-width="2.2"/></svg><svg style="position:absolute;left:2370px;top:70px" width="80" height="45" viewBox="2370 70 80 45" fill="none"><path d="M2397.2 92.4 V79.9 L2415 91 L2403.6 98.9" stroke="#cccccc" stroke-width="1.8" stroke-linejoin="miter"/><ellipse cx="2394.2" cy="100.6" rx="3.9" ry="6" stroke="#cccccc" stroke-width="1.7"/><path d="M2390.5 98.9 H2398 M2386.8 101.8 H2390.4 M2398 101.8 H2401.7 M2387.3 96.6 L2390.2 98.6 M2401.1 96.6 L2398.2 98.6 M2387.3 107 L2390.2 104.8 M2401.1 107 L2398.2 104.8" stroke="#cccccc" stroke-width="1.6"/><path d="M2423.5 91.2 L2430.2 97.6 L2437.1 91.2" stroke="#cccccc" stroke-width="1.6"/></svg><svg style="position:absolute;left:2458px;top:79px;" width="30" height="28" viewBox="0 0 30 28" fill="none"><rect x="3" y="2.5" width="22" height="22" rx="2.5" stroke="#cccccc" stroke-width="2"/><path d="M14 2.5 V24.5" stroke="#cccccc" stroke-width="2"/></svg><div style="position:absolute;left:2506.8px;top:91.8px;width:4.4px;height:4.4px;border-radius:50%;background:#cccccc;"></div><div style="position:absolute;left:2515.8px;top:91.8px;width:4.4px;height:4.4px;border-radius:50%;background:#cccccc;"></div><div style="position:absolute;left:2524.8px;top:91.8px;width:4.4px;height:4.4px;border-radius:50%;background:#cccccc;"></div><div style="position:absolute;left:773.00px;top:136.24px;font-family:'Liberation Sans', sans-serif;font-size:20.95px;line-height:1.117em;color:#a9a9a9;font-weight:400;white-space:pre;transform:scaleX(1.0938);transform-origin:0 0;">AspireApplication.ApiService</div><svg style="position:absolute;left:1074px;top:136.5px;" width="16" height="20" viewBox="0 0 16 20" fill="none"><path d="M4.4 2 L12.4 10 L4.4 18" stroke="#a9a9a9" stroke-width="1.8"/></svg><svg style="position:absolute;left:1100px;top:133.5px" width="27" height="25.0" viewBox="1100 133.5 27 25.0" fill="none"><path d="M1115.62 140.67 A7.3 7.3 0 1 0 1115.62 150.43" stroke="#519aba" stroke-width="3.6"/><path d="M1118.60 139.90 L1118.00 149.90 M1121.40 139.90 L1120.80 149.90 M1116.60 142.90 H1122.90 M1116.40 146.60 H1122.70" stroke="#519aba" stroke-width="1.3"/></svg><div style="position:absolute;left:1136.00px;top:136.24px;font-family:'Liberation Sans', sans-serif;font-size:20.95px;line-height:1.117em;color:#a9a9a9;font-weight:400;white-space:pre;transform:scaleX(1.0544);transform-origin:0 0;">Program.cs</div><svg style="position:absolute;left:1257px;top:136.5px;" width="16" height="20" viewBox="0 0 16 20" fill="none"><path d="M4.4 2 L12.4 10 L4.4 18" stroke="#a9a9a9" stroke-width="1.8"/></svg><div style="position:absolute;left:1279.4px;top:149.8px;width:3.2px;height:3.2px;background:#a9a9a9;"></div><div style="position:absolute;left:1285.9px;top:149.8px;width:3.2px;height:3.2px;background:#a9a9a9;"></div><div style="position:absolute;left:1292.4px;top:149.8px;width:3.2px;height:3.2px;background:#a9a9a9;"></div><div style="position:absolute;left:743px;top:166px;width:1817px;height:1172px;overflow:hidden;"><div style="position:absolute;left:-743px;top:-166px;width:2560px;height:1338px;"><div style="position:absolute;left:869px;top:556.8000000000001px;width:1665px;height:34.2px;background:#4b4a1c;"></div><div style="position:absolute;left:898px;top:558.3000000000001px;width:265px;height:31.200000000000003px;background:#5f5d35;border-radius:6px;"></div><div style="position:absolute;left:869px;top:283.2px;width:2px;height:273.6000000000001px;background:#404040;"></div><div style="position:absolute;left:928px;top:317.4px;width:2px;height:239.4000000000001px;background:#707070;"></div><div style="position:absolute;left:987px;top:385.8px;width:2px;height:102.59999999999997px;background:#404040;"></div><div style="position:absolute;left:869px;top:922.2px;width:2px;height:34.2px;background:#404040;"></div><div style="position:absolute;left:752.24px;top:151.35px;width:69.76px;text-align:right;font-family:'Liberation Mono', monospace;font-size:26.0px;line-height:1.1328em;color:#858585;white-space:pre;transform:scaleX(0.9462);transform-origin:100% 0;">17</div><div style="position:absolute;left:869.00px;top:151.35px;font-family:'Liberation Mono', monospace;font-size:26.0px;line-height:1.1328em;color:#d4d4d4;font-weight:400;white-space:pre;transform:scaleX(0.9462);transform-origin:0 0;-webkit-text-stroke:0.3px currentColor;"><span style="color:#ffd700;">}</span><span style="color:#d4d4d4;">;</span></div><div style="position:absolute;left:752.24px;top:185.55px;width:69.76px;text-align:right;font-family:'Liberation Mono', monospace;font-size:26.0px;line-height:1.1328em;color:#858585;white-space:pre;transform:scaleX(0.9462);transform-origin:100% 0;">18</div><div style="position:absolute;left:752.24px;top:219.75px;width:69.76px;text-align:right;font-family:'Liberation Mono', monospace;font-size:26.0px;line-height:1.1328em;color:#858585;white-space:pre;transform:scaleX(0.9462);transform-origin:100% 0;">19</div><div style="position:absolute;left:869.00px;top:219.75px;font-family:'Liberation Mono', monospace;font-size:26.0px;line-height:1.1328em;color:#d4d4d4;font-weight:400;white-space:pre;transform:scaleX(0.9462);transform-origin:0 0;-webkit-text-stroke:0.3px currentColor;"><span style="color:#9cdcfe;">app</span><span style="color:#d4d4d4;">.</span><span style="color:#9cdcfe;">MapGet</span><span style="color:#ffd700;">(</span><span style="color:#ce9178;">&quot;/</span><span style="color:#ce9178;">weatherforecast</span><span style="color:#ce9178;">&quot;</span><span style="color:#d4d4d4;">,</span> <span style="color:#da70d6;">()</span> <span style="color:transparent">=&gt;</span></div><div style="position:absolute;left:752.24px;top:253.96px;width:69.76px;text-align:right;font-family:'Liberation Mono', monospace;font-size:26.0px;line-height:1.1328em;color:#858585;white-space:pre;transform:scaleX(0.9462);transform-origin:100% 0;">20</div><div style="position:absolute;left:869.00px;top:253.96px;font-family:'Liberation Mono', monospace;font-size:26.0px;line-height:1.1328em;color:#d4d4d4;font-weight:400;white-space:pre;transform:scaleX(0.9462);transform-origin:0 0;-webkit-text-stroke:0.3px currentColor;"><span style="color:#da70d6;">{</span></div><div style="position:absolute;left:752.24px;top:288.16px;width:69.76px;text-align:right;font-family:'Liberation Mono', monospace;font-size:26.0px;line-height:1.1328em;color:#858585;white-space:pre;transform:scaleX(0.9462);transform-origin:100% 0;">21</div><div style="position:absolute;left:869.00px;top:288.16px;font-family:'Liberation Mono', monospace;font-size:26.0px;line-height:1.1328em;color:#d4d4d4;font-weight:400;white-space:pre;transform:scaleX(0.9462);transform-origin:0 0;-webkit-text-stroke:0.3px currentColor;">    <span style="color:#569cd6;">var</span> <span style="color:#9cdcfe;">forecast</span> <span style="color:#d4d4d4;">=</span> <span style="color:#9cdcfe;">Enumerable</span><span style="color:#d4d4d4;">.</span><span style="color:#9cdcfe;">Range</span><span style="color:#179fff;">(</span><span style="color:#b5cea8;">1</span><span style="color:#d4d4d4;">,</span> <span style="color:#b5cea8;">5</span><span style="color:#179fff;">)</span><span style="color:#d4d4d4;">.</span><span style="color:#9cdcfe;">Select</span><span style="color:#179fff;">(</span><span style="color:#9cdcfe;">index</span> <span style="color:transparent">=&gt;</span></div><div style="position:absolute;left:752.24px;top:322.36px;width:69.76px;text-align:right;font-family:'Liberation Mono', monospace;font-size:26.0px;line-height:1.1328em;color:#858585;white-space:pre;transform:scaleX(0.9462);transform-origin:100% 0;">22</div><div style="position:absolute;left:869.00px;top:322.36px;font-family:'Liberation Mono', monospace;font-size:26.0px;line-height:1.1328em;color:#d4d4d4;font-weight:400;white-space:pre;transform:scaleX(0.9462);transform-origin:0 0;-webkit-text-stroke:0.3px currentColor;">        <span style="color:#569cd6;">new</span> <span style="color:#4ec9b0;">WeatherForecast</span></div><div style="position:absolute;left:752.24px;top:356.56px;width:69.76px;text-align:right;font-family:'Liberation Mono', monospace;font-size:26.0px;line-height:1.1328em;color:#858585;white-space:pre;transform:scaleX(0.9462);transform-origin:100% 0;">23</div><div style="position:absolute;left:869.00px;top:356.56px;font-family:'Liberation Mono', monospace;font-size:26.0px;line-height:1.1328em;color:#d4d4d4;font-weight:400;white-space:pre;transform:scaleX(0.9462);transform-origin:0 0;-webkit-text-stroke:0.3px currentColor;">        <span style="color:#ffd700;">(</span></div><div style="position:absolute;left:752.24px;top:390.76px;width:69.76px;text-align:right;font-family:'Liberation Mono', monospace;font-size:26.0px;line-height:1.1328em;color:#858585;white-space:pre;transform:scaleX(0.9462);transform-origin:100% 0;">24</div><div style="position:absolute;left:869.00px;top:390.76px;font-family:'Liberation Mono', monospace;font-size:26.0px;line-height:1.1328em;color:#d4d4d4;font-weight:400;white-space:pre;transform:scaleX(0.9462);transform-origin:0 0;-webkit-text-stroke:0.3px currentColor;">            <span style="color:#9cdcfe;">DateOnly</span><span style="color:#d4d4d4;">.</span><span style="color:#9cdcfe;">FromDateTime</span><span style="color:#da70d6;">(</span><span style="color:#9cdcfe;">DateTime</span><span style="color:#d4d4d4;">.</span><span style="color:#9cdcfe;">Now</span><span style="color:#d4d4d4;">.</span><span style="color:#9cdcfe;">AddDays</span><span style="color:#179fff;">(</span><span style="color:#9cdcfe;">index</span><span style="color:#179fff;">)</span><span style="color:#da70d6;">)</span><span style="color:#d4d4d4;">,</span></div><div style="position:absolute;left:752.24px;top:424.96px;width:69.76px;text-align:right;font-family:'Liberation Mono', monospace;font-size:26.0px;line-height:1.1328em;color:#858585;white-space:pre;transform:scaleX(0.9462);transform-origin:100% 0;">25</div><div style="position:absolute;left:869.00px;top:424.96px;font-family:'Liberation Mono', monospace;font-size:26.0px;line-height:1.1328em;color:#d4d4d4;font-weight:400;white-space:pre;transform:scaleX(0.9462);transform-origin:0 0;-webkit-text-stroke:0.3px currentColor;">            <span style="color:#9cdcfe;">Random</span><span style="color:#d4d4d4;">.</span><span style="color:#9cdcfe;">Shared</span><span style="color:#d4d4d4;">.</span><span style="color:#9cdcfe;">Next</span><span style="color:#da70d6;">(</span><span style="color:#b5cea8;">-20</span><span style="color:#d4d4d4;">,</span> <span style="color:#b5cea8;">55</span><span style="color:#da70d6;">)</span><span style="color:#d4d4d4;">,</span></div><div style="position:absolute;left:752.24px;top:459.16px;width:69.76px;text-align:right;font-family:'Liberation Mono', monospace;font-size:26.0px;line-height:1.1328em;color:#858585;white-space:pre;transform:scaleX(0.9462);transform-origin:100% 0;">26</div><div style="position:absolute;left:869.00px;top:459.16px;font-family:'Liberation Mono', monospace;font-size:26.0px;line-height:1.1328em;color:#d4d4d4;font-weight:400;white-space:pre;transform:scaleX(0.9462);transform-origin:0 0;-webkit-text-stroke:0.3px currentColor;">            <span style="color:#9cdcfe;">summaries</span><span style="color:#da70d6;">[</span><span style="color:#9cdcfe;">Random</span><span style="color:#d4d4d4;">.</span><span style="color:#9cdcfe;">Shared</span><span style="color:#d4d4d4;">.</span><span style="color:#9cdcfe;">Next</span><span style="color:#179fff;">(</span><span style="color:#9cdcfe;">summaries</span><span style="color:#d4d4d4;">.</span><span style="color:#9cdcfe;">Length</span><span style="color:#179fff;">)</span><span style="color:#da70d6;">]</span></div><div style="position:absolute;left:752.24px;top:493.36px;width:69.76px;text-align:right;font-family:'Liberation Mono', monospace;font-size:26.0px;line-height:1.1328em;color:#858585;white-space:pre;transform:scaleX(0.9462);transform-origin:100% 0;">27</div><div style="position:absolute;left:869.00px;top:493.36px;font-family:'Liberation Mono', monospace;font-size:26.0px;line-height:1.1328em;color:#d4d4d4;font-weight:400;white-space:pre;transform:scaleX(0.9462);transform-origin:0 0;-webkit-text-stroke:0.3px currentColor;">        <span style="color:#ffd700;">)</span><span style="color:#179fff;">)</span></div><div style="position:absolute;left:752.24px;top:527.56px;width:69.76px;text-align:right;font-family:'Liberation Mono', monospace;font-size:26.0px;line-height:1.1328em;color:#858585;white-space:pre;transform:scaleX(0.9462);transform-origin:100% 0;">28</div><div style="position:absolute;left:869.00px;top:527.56px;font-family:'Liberation Mono', monospace;font-size:26.0px;line-height:1.1328em;color:#d4d4d4;font-weight:400;white-space:pre;transform:scaleX(0.9462);transform-origin:0 0;-webkit-text-stroke:0.3px currentColor;">        <span style="color:#d4d4d4;">.</span><span style="color:#9cdcfe;">ToArray</span><span style="color:#179fff;">()</span><span style="color:#d4d4d4;">;</span></div><div style="position:absolute;left:752.24px;top:561.76px;width:69.76px;text-align:right;font-family:'Liberation Mono', monospace;font-size:26.0px;line-height:1.1328em;color:#c6c6c6;white-space:pre;transform:scaleX(0.9462);transform-origin:100% 0;">29</div><div style="position:absolute;left:869.00px;top:561.76px;font-family:'Liberation Mono', monospace;font-size:26.0px;line-height:1.1328em;color:#d4d4d4;font-weight:400;white-space:pre;transform:scaleX(0.9462);transform-origin:0 0;-webkit-text-stroke:0.3px currentColor;">    <span style="color:#c586c0;">return</span> <span style="color:#9cdcfe;">forecast</span><span style="color:#d4d4d4;">;</span></div><div style="position:absolute;left:752.24px;top:595.96px;width:69.76px;text-align:right;font-family:'Liberation Mono', monospace;font-size:26.0px;line-height:1.1328em;color:#858585;white-space:pre;transform:scaleX(0.9462);transform-origin:100% 0;">30</div><div style="position:absolute;left:869.00px;top:595.96px;font-family:'Liberation Mono', monospace;font-size:26.0px;line-height:1.1328em;color:#d4d4d4;font-weight:400;white-space:pre;transform:scaleX(0.9462);transform-origin:0 0;-webkit-text-stroke:0.3px currentColor;"><span style="color:#da70d6;">}</span><span style="color:#ffd700;">)</span><span style="color:#d4d4d4;">;</span></div><div style="position:absolute;left:752.24px;top:630.16px;width:69.76px;text-align:right;font-family:'Liberation Mono', monospace;font-size:26.0px;line-height:1.1328em;color:#858585;white-space:pre;transform:scaleX(0.9462);transform-origin:100% 0;">31</div><div style="position:absolute;left:752.24px;top:664.36px;width:69.76px;text-align:right;font-family:'Liberation Mono', monospace;font-size:26.0px;line-height:1.1328em;color:#858585;white-space:pre;transform:scaleX(0.9462);transform-origin:100% 0;">32</div><div style="position:absolute;left:869.00px;top:664.36px;font-family:'Liberation Mono', monospace;font-size:26.0px;line-height:1.1328em;color:#d4d4d4;font-weight:400;white-space:pre;transform:scaleX(0.9462);transform-origin:0 0;-webkit-text-stroke:0.3px currentColor;"><span style="color:#9cdcfe;">app</span><span style="color:#d4d4d4;">.</span><span style="color:#9cdcfe;">MapDefaultEndpoints</span><span style="color:#ffd700;">()</span><span style="color:#d4d4d4;">;</span></div><div style="position:absolute;left:752.24px;top:698.56px;width:69.76px;text-align:right;font-family:'Liberation Mono', monospace;font-size:26.0px;line-height:1.1328em;color:#858585;white-space:pre;transform:scaleX(0.9462);transform-origin:100% 0;">33</div><div style="position:absolute;left:752.24px;top:732.76px;width:69.76px;text-align:right;font-family:'Liberation Mono', monospace;font-size:26.0px;line-height:1.1328em;color:#858585;white-space:pre;transform:scaleX(0.9462);transform-origin:100% 0;">34</div><div style="position:absolute;left:869.00px;top:732.76px;font-family:'Liberation Mono', monospace;font-size:26.0px;line-height:1.1328em;color:#d4d4d4;font-weight:400;white-space:pre;transform:scaleX(0.9462);transform-origin:0 0;-webkit-text-stroke:0.3px currentColor;"><span style="color:#9cdcfe;">app</span><span style="color:#d4d4d4;">.</span><span style="color:#9cdcfe;">Run</span><span style="color:#ffd700;">()</span><span style="color:#d4d4d4;">;</span></div><div style="position:absolute;left:752.24px;top:766.96px;width:69.76px;text-align:right;font-family:'Liberation Mono', monospace;font-size:26.0px;line-height:1.1328em;color:#858585;white-space:pre;transform:scaleX(0.9462);transform-origin:100% 0;">35</div><div style="position:absolute;left:752.24px;top:829.96px;width:69.76px;text-align:right;font-family:'Liberation Mono', monospace;font-size:26.0px;line-height:1.1328em;color:#858585;white-space:pre;transform:scaleX(0.9462);transform-origin:100% 0;">36</div><div style="position:absolute;left:869.00px;top:829.96px;font-family:'Liberation Mono', monospace;font-size:26.0px;line-height:1.1328em;color:#d4d4d4;font-weight:400;white-space:pre;transform:scaleX(0.9462);transform-origin:0 0;-webkit-text-stroke:0.3px currentColor;"><span style="color:#569cd6;">record</span> <span style="color:#4ec9b0;">WeatherForecast</span><span style="color:#ffd700;">(</span><span style="color:#9cdcfe;">DateOnly</span> <span style="color:#9cdcfe;">Date</span><span style="color:#d4d4d4;">,</span> <span style="color:#569cd6;">int</span> <span style="color:#9cdcfe;">TemperatureC</span><span style="color:#d4d4d4;">,</span> <span style="color:#569cd6;">string</span><span style="color:#d4d4d4;">?</span> <span style="color:#9cdcfe;">Summary</span><span style="color:#ffd700;">)</span></div><div style="position:absolute;left:752.24px;top:864.16px;width:69.76px;text-align:right;font-family:'Liberation Mono', monospace;font-size:26.0px;line-height:1.1328em;color:#858585;white-space:pre;transform:scaleX(0.9462);transform-origin:100% 0;">37</div><div style="position:absolute;left:869.00px;top:864.16px;font-family:'Liberation Mono', monospace;font-size:26.0px;line-height:1.1328em;color:#d4d4d4;font-weight:400;white-space:pre;transform:scaleX(0.9462);transform-origin:0 0;-webkit-text-stroke:0.3px currentColor;"><span style="color:#ffd700;">{</span></div><div style="position:absolute;left:752.24px;top:927.16px;width:69.76px;text-align:right;font-family:'Liberation Mono', monospace;font-size:26.0px;line-height:1.1328em;color:#858585;white-space:pre;transform:scaleX(0.9462);transform-origin:100% 0;">38</div><div style="position:absolute;left:869.00px;top:927.16px;font-family:'Liberation Mono', monospace;font-size:26.0px;line-height:1.1328em;color:#d4d4d4;font-weight:400;white-space:pre;transform:scaleX(0.9462);transform-origin:0 0;-webkit-text-stroke:0.3px currentColor;">    <span style="color:#569cd6;">public</span> <span style="color:#569cd6;">int</span> <span style="color:#9cdcfe;">TemperatureF</span> <span style="color:transparent">=&gt;</span> <span style="color:#b5cea8;">32</span> <span style="color:#d4d4d4;">+</span> <span style="color:#da70d6;">(</span><span style="color:#569cd6;">int</span><span style="color:#da70d6;">)</span><span style="color:#da70d6;">(</span><span style="color:#9cdcfe;">TemperatureC</span> <span style="color:#d4d4d4;">/</span> <span style="color:#b5cea8;">0.5556</span><span style="color:#da70d6;">)</span><span style="color:#d4d4d4;">;</span></div><div style="position:absolute;left:752.24px;top:961.36px;width:69.76px;text-align:right;font-family:'Liberation Mono', monospace;font-size:26.0px;line-height:1.1328em;color:#858585;white-space:pre;transform:scaleX(0.9462);transform-origin:100% 0;">39</div><div style="position:absolute;left:869.00px;top:961.36px;font-family:'Liberation Mono', monospace;font-size:26.0px;line-height:1.1328em;color:#d4d4d4;font-weight:400;white-space:pre;transform:scaleX(0.9462);transform-origin:0 0;-webkit-text-stroke:0.3px currentColor;"><span style="color:#ffd700;">}</span></div><div style="position:absolute;left:752.24px;top:995.56px;width:69.76px;text-align:right;font-family:'Liberation Mono', monospace;font-size:26.0px;line-height:1.1328em;color:#858585;white-space:pre;transform:scaleX(0.9462);transform-origin:100% 0;">40</div><svg style="position:absolute;left:1371.84px;top:220.8px;" width="28" height="22" viewBox="0 0 28 22" fill="none"><path d="M2.3 8.05 H23 M2.3 13.7 H23 M14.4 3.4 L25.4 10.9 L14.4 18.4" stroke="#d4d4d4" stroke-width="2.3" stroke-linejoin="miter"/></svg><svg style="position:absolute;left:1681.8px;top:289.2px;" width="28" height="22" viewBox="0 0 28 22" fill="none"><path d="M2.3 8.05 H23 M2.3 13.7 H23 M14.4 3.4 L25.4 10.9 L14.4 18.4" stroke="#d4d4d4" stroke-width="2.3" stroke-linejoin="miter"/></svg><svg style="position:absolute;left:1283.28px;top:928.2px;" width="28" height="22" viewBox="0 0 28 22" fill="none"><path d="M2.3 8.05 H23 M2.3 13.7 H23 M14.4 3.4 L25.4 10.9 L14.4 18.4" stroke="#d4d4d4" stroke-width="2.3" stroke-linejoin="miter"/></svg><svg style="position:absolute;left:0;top:0" width="2560" height="1338"><circle cx="1319.18" cy="231.90" r="2.2" fill="#414141"/><circle cx="1363.46" cy="231.90" r="2.2" fill="#414141"/><circle cx="876.38" cy="300.30" r="2.2" fill="#414141"/><circle cx="891.14" cy="300.30" r="2.2" fill="#414141"/><circle cx="905.90" cy="300.30" r="2.2" fill="#414141"/><circle cx="920.66" cy="300.30" r="2.2" fill="#414141"/><circle cx="979.70" cy="300.30" r="2.2" fill="#414141"/><circle cx="1112.54" cy="300.30" r="2.2" fill="#414141"/><circle cx="1142.06" cy="300.30" r="2.2" fill="#414141"/><circle cx="1437.26" cy="300.30" r="2.2" fill="#414141"/><circle cx="1673.42" cy="300.30" r="2.2" fill="#414141"/><circle cx="876.38" cy="334.50" r="2.2" fill="#414141"/><circle cx="891.14" cy="334.50" r="2.2" fill="#414141"/><circle cx="905.90" cy="334.50" r="2.2" fill="#414141"/><circle cx="920.66" cy="334.50" r="2.2" fill="#414141"/><circle cx="935.42" cy="334.50" r="2.2" fill="#414141"/><circle cx="950.18" cy="334.50" r="2.2" fill="#414141"/><circle cx="964.94" cy="334.50" r="2.2" fill="#414141"/><circle cx="979.70" cy="334.50" r="2.2" fill="#414141"/><circle cx="1038.74" cy="334.50" r="2.2" fill="#414141"/><circle cx="876.38" cy="368.70" r="2.2" fill="#414141"/><circle cx="891.14" cy="368.70" r="2.2" fill="#414141"/><circle cx="905.90" cy="368.70" r="2.2" fill="#414141"/><circle cx="920.66" cy="368.70" r="2.2" fill="#414141"/><circle cx="935.42" cy="368.70" r="2.2" fill="#414141"/><circle cx="950.18" cy="368.70" r="2.2" fill="#414141"/><circle cx="964.94" cy="368.70" r="2.2" fill="#414141"/><circle cx="979.70" cy="368.70" r="2.2" fill="#414141"/><circle cx="876.38" cy="402.90" r="2.2" fill="#414141"/><circle cx="891.14" cy="402.90" r="2.2" fill="#414141"/><circle cx="905.90" cy="402.90" r="2.2" fill="#414141"/><circle cx="920.66" cy="402.90" r="2.2" fill="#414141"/><circle cx="935.42" cy="402.90" r="2.2" fill="#414141"/><circle cx="950.18" cy="402.90" r="2.2" fill="#414141"/><circle cx="964.94" cy="402.90" r="2.2" fill="#414141"/><circle cx="979.70" cy="402.90" r="2.2" fill="#414141"/><circle cx="994.46" cy="402.90" r="2.2" fill="#414141"/><circle cx="1009.22" cy="402.90" r="2.2" fill="#414141"/><circle cx="1023.98" cy="402.90" r="2.2" fill="#414141"/><circle cx="1038.74" cy="402.90" r="2.2" fill="#414141"/><circle cx="876.38" cy="437.10" r="2.2" fill="#414141"/><circle cx="891.14" cy="437.10" r="2.2" fill="#414141"/><circle cx="905.90" cy="437.10" r="2.2" fill="#414141"/><circle cx="920.66" cy="437.10" r="2.2" fill="#414141"/><circle cx="935.42" cy="437.10" r="2.2" fill="#414141"/><circle cx="950.18" cy="437.10" r="2.2" fill="#414141"/><circle cx="964.94" cy="437.10" r="2.2" fill="#414141"/><circle cx="979.70" cy="437.10" r="2.2" fill="#414141"/><circle cx="994.46" cy="437.10" r="2.2" fill="#414141"/><circle cx="1009.22" cy="437.10" r="2.2" fill="#414141"/><circle cx="1023.98" cy="437.10" r="2.2" fill="#414141"/><circle cx="1038.74" cy="437.10" r="2.2" fill="#414141"/><circle cx="1392.98" cy="437.10" r="2.2" fill="#414141"/><circle cx="876.38" cy="471.30" r="2.2" fill="#414141"/><circle cx="891.14" cy="471.30" r="2.2" fill="#414141"/><circle cx="905.90" cy="471.30" r="2.2" fill="#414141"/><circle cx="920.66" cy="471.30" r="2.2" fill="#414141"/><circle cx="935.42" cy="471.30" r="2.2" fill="#414141"/><circle cx="950.18" cy="471.30" r="2.2" fill="#414141"/><circle cx="964.94" cy="471.30" r="2.2" fill="#414141"/><circle cx="979.70" cy="471.30" r="2.2" fill="#414141"/><circle cx="994.46" cy="471.30" r="2.2" fill="#414141"/><circle cx="1009.22" cy="471.30" r="2.2" fill="#414141"/><circle cx="1023.98" cy="471.30" r="2.2" fill="#414141"/><circle cx="1038.74" cy="471.30" r="2.2" fill="#414141"/><circle cx="876.38" cy="505.50" r="2.2" fill="#414141"/><circle cx="891.14" cy="505.50" r="2.2" fill="#414141"/><circle cx="905.90" cy="505.50" r="2.2" fill="#414141"/><circle cx="920.66" cy="505.50" r="2.2" fill="#414141"/><circle cx="935.42" cy="505.50" r="2.2" fill="#414141"/><circle cx="950.18" cy="505.50" r="2.2" fill="#414141"/><circle cx="964.94" cy="505.50" r="2.2" fill="#414141"/><circle cx="979.70" cy="505.50" r="2.2" fill="#414141"/><circle cx="876.38" cy="539.70" r="2.2" fill="#414141"/><circle cx="891.14" cy="539.70" r="2.2" fill="#414141"/><circle cx="905.90" cy="539.70" r="2.2" fill="#414141"/><circle cx="920.66" cy="539.70" r="2.2" fill="#414141"/><circle cx="935.42" cy="539.70" r="2.2" fill="#414141"/><circle cx="950.18" cy="539.70" r="2.2" fill="#414141"/><circle cx="964.94" cy="539.70" r="2.2" fill="#414141"/><circle cx="979.70" cy="539.70" r="2.2" fill="#414141"/><circle cx="1023.98" cy="573.90" r="2.2" fill="#414141"/><circle cx="964.94" cy="842.10" r="2.2" fill="#414141"/><circle cx="1333.94" cy="842.10" r="2.2" fill="#414141"/><circle cx="1422.50" cy="842.10" r="2.2" fill="#414141"/><circle cx="1481.54" cy="842.10" r="2.2" fill="#414141"/><circle cx="1688.18" cy="842.10" r="2.2" fill="#414141"/><circle cx="1806.26" cy="842.10" r="2.2" fill="#414141"/><circle cx="876.38" cy="939.30" r="2.2" fill="#414141"/><circle cx="891.14" cy="939.30" r="2.2" fill="#414141"/><circle cx="905.90" cy="939.30" r="2.2" fill="#414141"/><circle cx="920.66" cy="939.30" r="2.2" fill="#414141"/><circle cx="1023.98" cy="939.30" r="2.2" fill="#414141"/><circle cx="1083.02" cy="939.30" r="2.2" fill="#414141"/><circle cx="1274.90" cy="939.30" r="2.2" fill="#414141"/><circle cx="1319.18" cy="939.30" r="2.2" fill="#414141"/><circle cx="1363.46" cy="939.30" r="2.2" fill="#414141"/><circle cx="1392.98" cy="939.30" r="2.2" fill="#414141"/><circle cx="1673.42" cy="939.30" r="2.2" fill="#414141"/><circle cx="1702.94" cy="939.30" r="2.2" fill="#414141"/></svg><svg style="position:absolute;left:1055px;top:238px" width="235" height="14" viewBox="1055 238 235 14" fill="none"><path d="M1062.50 247.2 L1067.76 243.6 L1073.02 247.2 L1078.28 243.6 L1083.54 247.2 L1088.80 243.6 L1094.06 247.2 L1099.32 243.6 L1104.58 247.2 L1109.84 243.6 L1115.10 247.2 L1120.36 243.6 L1125.62 247.2 L1130.88 243.6 L1136.14 247.2 L1141.40 243.6 L1146.66 247.2 L1151.92 243.6 L1157.18 247.2 L1162.44 243.6 L1167.70 247.2 L1172.96 243.6 L1178.22 247.2 L1183.48 243.6 L1188.74 247.2 L1194.00 243.6 L1199.26 247.2 L1204.52 243.6 L1209.78 247.2 L1215.04 243.6 L1220.30 247.2 L1225.56 243.6 L1230.82 247.2 L1236.08 243.6 L1241.34 247.2 L1246.60 243.6 L1251.86 247.2 L1257.12 243.6 L1262.38 247.2 L1267.64 243.6 L1272.90 247.2 L1278.16 243.6" stroke="#3794ff" stroke-width="1.7" stroke-linejoin="round"/></svg><div style="position:absolute;left:870.50px;top:800.37px;font-family:'Liberation Sans', sans-serif;font-size:20.14px;line-height:1.117em;color:#999999;font-weight:400;white-space:pre;transform:scaleX(1.0256);transform-origin:0 0;">1 reference</div><div style="position:absolute;left:928.75px;top:897.77px;font-family:'Liberation Sans', sans-serif;font-size:20.14px;line-height:1.117em;color:#999999;font-weight:400;white-space:pre;transform:scaleX(1.0205);transform-origin:0 0;">0 references</div><svg style="position:absolute;left:748px;top:557.6px;" width="30" height="30" viewBox="0 0 30 30" fill="none"><path d="M3 6 Q3 4 5 4 H16 L25 15 L16 26 H5 Q3 26 3 24 Z" stroke="#ffcc00" stroke-width="2.6" stroke-linejoin="round"/><circle cx="12" cy="15" r="4.2" fill="#e51400"/></svg><div style="position:absolute;left:869px;top:556.8000000000001px;width:29px;height:28.5px;background:#3c3b1e;"></div><svg style="position:absolute;left:871px;top:554.3000000000001px;" width="30" height="32" viewBox="0 0 30 32" fill="none"><circle cx="11" cy="11" r="8.5" fill="#ffcc00"/><path d="M7 18 V26 H13" stroke="#ffcc00" stroke-width="2.6"/><path d="M20 17 L22 22 L27 24 L22 26 L20 31 L18 26 L13 24 L18 22 Z" fill="#ffcc00"/></svg><svg style="position:absolute;left:900px;top:559.8000000000001px;" width="28" height="28" viewBox="0 0 28 28" fill="none"><path d="M4 5 Q4 3 6 3 H15 L24 14 L15 25 H6 Q4 25 4 23 Z" stroke="#ffcc00" stroke-width="2.6" stroke-linejoin="round"/></svg></div></div><div style="position:absolute;left:2533.5px;top:166px;width:1.3px;height:1172px;background:#3a3a3a;"></div><div style="position:absolute;left:2535px;top:425px;width:25px;height:536px;background:rgba(121,121,121,0.4);"></div><div style="position:absolute;left:2550px;top:447px;width:8px;height:16px;background:#4d8fd6;"></div><div style="position:absolute;left:2535px;top:557px;width:24px;height:34px;background:#5d5c3e;"></div><div style="position:absolute;left:2535px;top:603px;width:24px;height:2px;background:#9a9a9a;"></div><div style="position:absolute;left:2535px;top:606px;width:24px;height:13px;background:#5d5c3e;"></div><div style="position:absolute;left:2558.5px;top:0px;width:1.5px;height:1338px;background:#6a6a6a;"></div><div style="position:absolute;left:743px;top:166px;width:1791px;height:6px;background:linear-gradient(rgba(0,0,0,0.5), rgba(0,0,0,0));"></div>
</body></html>
